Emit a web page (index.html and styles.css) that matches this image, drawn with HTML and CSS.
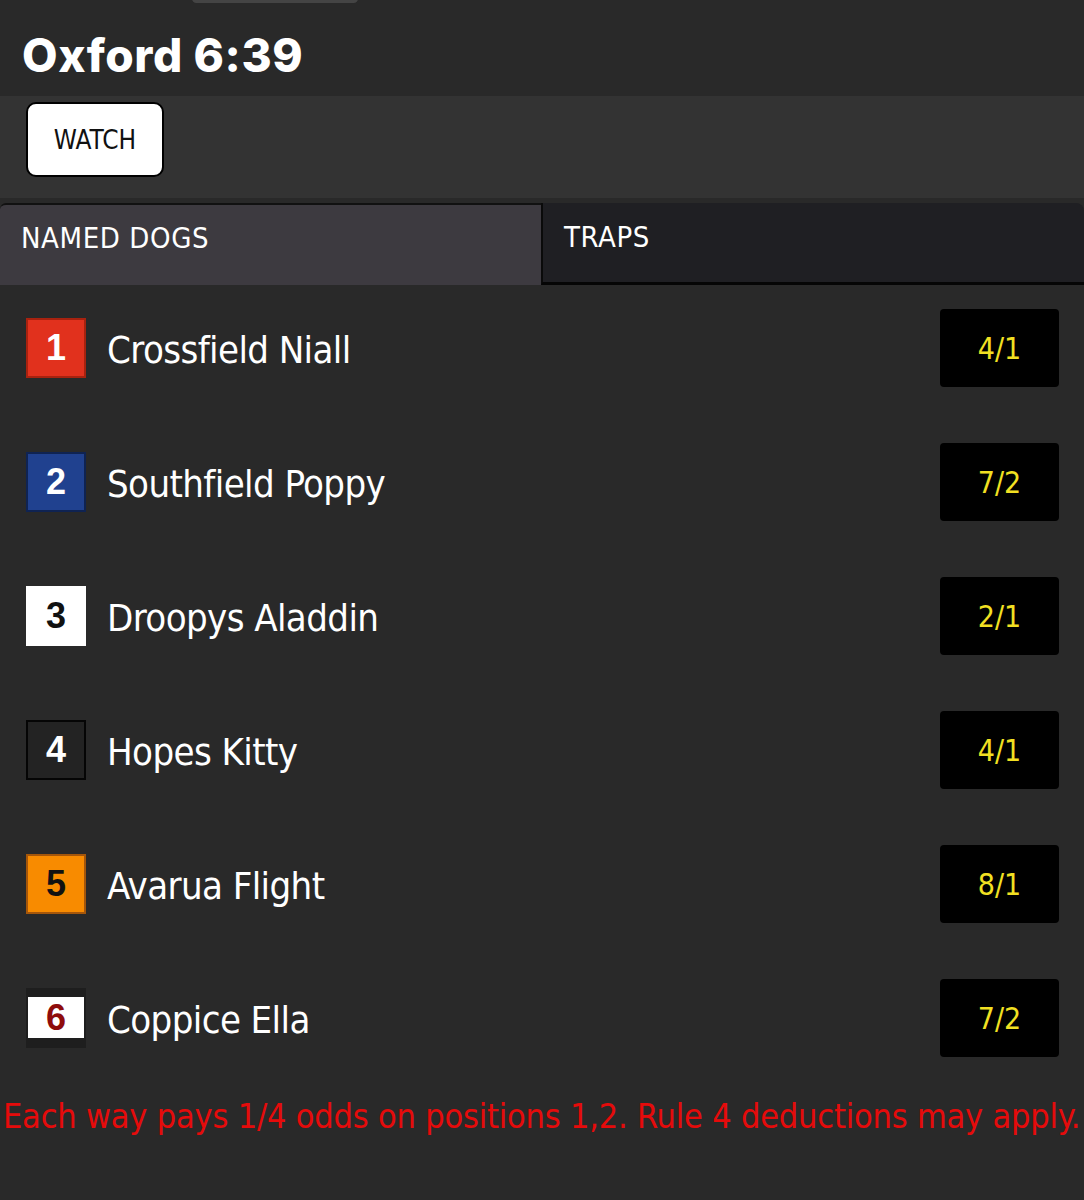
FILE: index.html
```html
<!DOCTYPE html>
<html lang="en">
<head>
<meta charset="utf-8">
<title>Oxford 6:39</title>
<link rel="stylesheet" href="styles.css">
</head>
<body>
<div class="page">
  <header class="header">
    <div class="grabber"></div>
    <h1 class="title">Oxford 6:39</h1>
  </header>
  <div class="actions">
    <button class="watch">WATCH</button>
  </div>
  <nav class="tabs">
    <div class="tab tab-active">NAMED DOGS</div>
    <div class="tab tab-other">TRAPS</div>
  </nav>
  <ul class="runners">
    <li class="runner"><span class="trap trap-1">1</span><span class="name">Crossfield Niall</span><span class="odds">4/1</span></li>
    <li class="runner"><span class="trap trap-2">2</span><span class="name">Southfield Poppy</span><span class="odds">7/2</span></li>
    <li class="runner"><span class="trap trap-3">3</span><span class="name">Droopys Aladdin</span><span class="odds">2/1</span></li>
    <li class="runner"><span class="trap trap-4">4</span><span class="name">Hopes Kitty</span><span class="odds">4/1</span></li>
    <li class="runner"><span class="trap trap-5">5</span><span class="name">Avarua Flight</span><span class="odds">8/1</span></li>
    <li class="runner"><span class="trap trap-6">6</span><span class="name">Coppice Ella</span><span class="odds">7/2</span></li>
  </ul>
  <p class="terms">Each way pays 1/4 odds on positions 1,2. Rule 4 deductions may apply.</p>
</div>
</body>
</html>
```

FILE: styles.css
```css
* { box-sizing: border-box; }
html, body { margin: 0; padding: 0; background: #292929; }
body {
  font-family: "DejaVu Sans Condensed", "DejaVu Sans", sans-serif;
  font-stretch: condensed;
  color: #fff;
  width: 1084px;
  height: 1200px;
  overflow: hidden;
}
.header {
  position: relative;
  height: 96px;
  background: #292929;
  padding: 29px 0 0 22px;
}
.grabber {
  position: absolute;
  left: 192px;
  top: -6px;
  width: 166px;
  height: 9px;
  border-radius: 5px;
  background: #444;
}
.title {
  margin: 0;
  font-family: Inter, "Liberation Sans", sans-serif;
  font-stretch: normal;
  font-weight: 800;
  font-size: 46px;
  line-height: 52px;
  letter-spacing: 0.6px;
}
.actions {
  height: 102px;
  background: #333333;
  padding: 6px 0 0 26px;
}
.watch {
  width: 138px;
  height: 75px;
  background: #fff;
  border: 2px solid #000;
  border-radius: 10px;
  font-family: "DejaVu Sans Condensed", "DejaVu Sans", sans-serif;
  font-stretch: condensed;
  font-size: 26px;
  color: #111;
  padding: 0;
}
.tabs {
  display: flex;
  margin-top: 5px;
  height: 82px;
}
.tab {
  display: flex;
  align-items: center;
  font-size: 29px;
  padding-left: 21px;
  padding-bottom: 14px;
  letter-spacing: 0.6px;
}
.tab-active {
  width: 541px;
  background: #3d3a40;
  border-top: 2px solid #111;
  border-top-left-radius: 6px;
}
.tab-other {
  flex: 1;
  background: #1f1f23;
  border-left: 2px solid #0a0a0a;
  border-bottom: 3px solid #050505;
  border-top-right-radius: 8px;
  padding-bottom: 11px;
}
.runners {
  list-style: none;
  margin: 0;
  padding: 0;
}
.runner {
  height: 134px;
  display: flex;
  align-items: center;
  padding: 0 25px 8px 26px;
}
.trap {
  width: 60px;
  height: 60px;
  flex: none;
  display: flex;
  align-items: center;
  justify-content: center;
  font-family: "Liberation Sans", Arial, sans-serif;
  font-stretch: normal;
  font-weight: bold;
  font-size: 36px;
  border: 2px solid;
}
.trap-1 { background: #e1311d; border-color: #a8220f; color: #fff; }
.trap-2 { background: #20418f; border-color: #0f2352; color: #fff; }
.trap-3 { background: #fff; border-color: #fff; color: #111; }
.trap-4 { background: #232323; border-color: #050505; color: #fff; }
.trap-5 { background: #f88b00; border-color: #a5560a; color: #111; }
.trap-6 {
  background: #fff;
  border-color: #1e1e1e;
  border-width: 9px 2px 10px 2px;
  color: #8e0c0c;
}
.name {
  flex: 1;
  margin-left: 21px;
  font-size: 38px;
  letter-spacing: -0.6px;
  color: #fff;
  padding-top: 4px;
}
.odds {
  width: 119px;
  height: 78px;
  flex: none;
  display: flex;
  align-items: center;
  justify-content: center;
  background: #000;
  border-radius: 4px;
  color: #f2e022;
  font-size: 30px;
}
.terms {
  margin: 6px 0 0 3px;
  color: #e50b0b;
  font-size: 34px;
  line-height: 42px;
  letter-spacing: -0.2px;
  white-space: nowrap;
}
```
